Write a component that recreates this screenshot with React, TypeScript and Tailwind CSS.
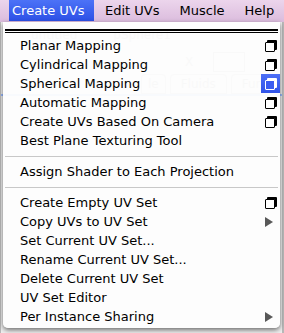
import React from "react"

type Item = {
  label: string
  option?: boolean
  arrow?: boolean
  active?: boolean
}

const groups: Item[][] = [
  [
    { label: "Planar Mapping", option: true },
    { label: "Cylindrical Mapping", option: true },
    { label: "Spherical Mapping", option: true, active: true },
    { label: "Automatic Mapping", option: true },
    { label: "Create UVs Based On Camera", option: true },
    { label: "Best Plane Texturing Tool" },
  ],
  [{ label: "Assign Shader to Each Projection" }],
  [
    { label: "Create Empty UV Set", option: true },
    { label: "Copy UVs to UV Set", arrow: true },
    { label: "Set Current UV Set..." },
    { label: "Rename Current UV Set..." },
    { label: "Delete Current UV Set" },
    { label: "UV Set Editor" },
    { label: "Per Instance Sharing", arrow: true },
  ],
]

function OptionBox({ active }: { active?: boolean }) {
  const line = active ? "#ffffff" : "#000000"
  const face = active ? "#3a5cf0" : "#ffffff"
  return (
    <svg width="12" height="12" viewBox="0 0 12 12">
      <rect x="2" y="0" width="10" height="10" rx="1" fill={line} />
      <rect x="0.5" y="2.5" width="9" height="9" rx="0.5" fill={face} stroke={line} />
    </svg>
  )
}

function Arrow() {
  return (
    <svg width="8" height="10" viewBox="0 0 8 10">
      <polygon points="0,0 8,5 0,10" fill="#585858" />
    </svg>
  )
}

function Row({ item }: { item: Item }) {
  return (
    <div className="flex h-[19px] items-center pl-[17px]">
      <span className="flex-1 whitespace-nowrap">{item.label}</span>
      <div
        className={`flex h-[19px] w-[19px] items-center justify-center ${
          item.active ? "bg-gradient-to-b from-[#4d6ff6] to-[#2f52e8]" : ""
        }`}
      >
        {item.option && <OptionBox active={item.active} />}
        {item.arrow && (
          <span className="-ml-[4px] flex">
            <Arrow />
          </span>
        )}
      </div>
    </div>
  )
}

export default function App() {
  return (
    <div
      className="relative h-[333px] w-[284px] overflow-hidden bg-[#b9b9b9]"
      style={{ fontFamily: '"DejaVu Sans", "Lucida Grande", sans-serif' }}
    >
      {/* menu bar */}
      <div className="flex h-[22px] items-center bg-gradient-to-b from-[#ecd5ec] to-[#dbbcdd] text-[13px] text-black">
        <div className="ml-[9px] flex h-[21px] w-[85px] items-center self-start bg-gradient-to-b from-[#4c72f7] to-[#2d50e6] pl-[3px] text-white">
          Create UVs
        </div>
        <div className="ml-[11px] flex gap-[20px]">
          <span>Edit UVs</span>
          <span>Muscle</span>
          <span>Help</span>
        </div>
      </div>

      {/* window behind the menu */}
      <div className="ml-[1px] h-[311px] w-[281px] bg-[#efefef] text-[12px] text-[#a4a4a4]">
        <div className="flex gap-[36px] pl-[30px] pt-[4px]">
          <span>untitled</span>
          <span>pSphere1</span>
        </div>
        <div className="mt-[8px] flex items-center pl-[184px]">
          <span>X</span>
          <div className="ml-[20px] h-[20px] w-[32px] border border-[#b4b4b4] bg-white" />
        </div>
        <div className="mt-[6px] flex h-[18px] items-end gap-[4px] border-b-2 border-[#9cbcff] pl-[140px]">
          <span className="rounded-t border border-[#bdbdbd] px-[6px]">le</span>
          <span className="rounded-t border border-[#bdbdbd] px-[10px]">Fluids</span>
          <span className="rounded-t border border-[#bdbdbd] px-[10px]">Fur</span>
        </div>
      </div>

      {/* drop-down menu */}
      <div className="absolute left-[3px] top-[22px] w-[277px] rounded-b-[5px] bg-[rgba(253,253,253,0.95)] pb-[2px] text-[13px] text-black shadow-[0_2px_5px_rgba(0,0,0,0.55)]">
        <div className="flex h-[14px] flex-col px-[2px] pt-[7px]">
          <div className="h-[2px] bg-black" />
          <div className="mt-[1px] h-[1px] bg-black" />
        </div>
        {groups.map((group, gi) => (
          <div key={gi}>
            {gi > 0 && (
              <div className="flex h-[12px] items-center px-[2px]">
                <div className="h-[1px] w-full bg-[#c8c8c8]" />
              </div>
            )}
            {group.map((item) => (
              <Row key={item.label} item={item} />
            ))}
          </div>
        ))}
      </div>
    </div>
  )
}
